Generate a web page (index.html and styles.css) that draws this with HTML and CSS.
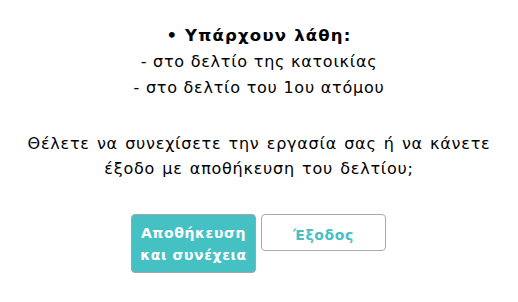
FILE: index.html
```html
<!DOCTYPE html>
<html>
<head>
<meta charset="utf-8">
<link rel="stylesheet" href="styles.css">
</head>
<body>
<div class="dialog">
  <div class="errors">
    <div class="title">• Υπάρχουν λάθη:</div>
    <div>- στο δελτίο της κατοικίας</div>
    <div>- στο δελτίο του 1ου ατόμου</div>
  </div>
  <p class="question">Θέλετε να συνεχίσετε την εργασία σας ή να κάνετε έξοδο με αποθήκευση του δελτίου;</p>
  <div class="actions">
    <button class="btn btn-primary">Αποθήκευση<br>και συνέχεια</button>
    <button class="btn btn-secondary">Έξοδος</button>
  </div>
</div>
</body>
</html>
```
FILE: styles.css
```css
html, body {
  margin: 0;
  padding: 0;
  background: #ffffff;
}
.dialog {
  width: 518px;
  padding-top: 23px;
  font-family: "DejaVu Sans", Verdana, sans-serif;
  font-size: 16px;
  letter-spacing: 0.75px;
  color: #000;
  text-align: center;
}
.errors {
  line-height: 26px;
}
.title {
  font-weight: bold;
  font-size: 16.5px;
  letter-spacing: 1.2px;
}
.question {
  margin: 30px auto 0;
  width: 500px;
  line-height: 25px;
  word-spacing: 1.4px;
}
.actions {
  display: flex;
  justify-content: center;
  align-items: flex-start;
  gap: 5px;
  margin-top: 33px;
  padding-right: 1px;
}
.btn {
  box-sizing: border-box;
  width: 125px;
  font-family: "DejaVu Sans", Verdana, sans-serif;
  font-weight: bold;
  font-size: 14px;
  letter-spacing: 0.6px;
  border-radius: 4px;
  cursor: pointer;
}
.btn-primary {
  background: #45c1c3;
  color: #fff;
  border: 1px solid #a4a4a4;
  line-height: 22px;
  padding: 7px 0 6px;
}
.btn-secondary {
  background: #fff;
  color: #45c1c3;
  border: 1px solid #aaaaaa;
  height: 37px;
  line-height: 20px;
  padding: 10px 0 5px;
}
```
